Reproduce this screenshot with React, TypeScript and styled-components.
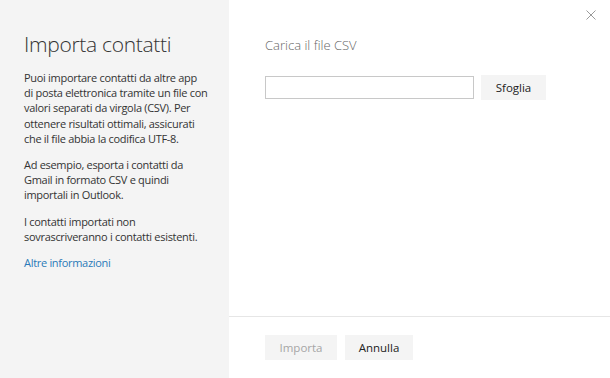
import React from "react";
import styled, { createGlobalStyle } from "styled-components";

const Global = createGlobalStyle`
  html, body { margin: 0; padding: 0; background: #ffffff; }
  body { font-family: "Open Sans", "Segoe UI", "Noto Sans", sans-serif; }
  * { box-sizing: border-box; }
`;

const Dialog = styled.div`
  display: flex;
  width: 610px;
  height: 378px;
  position: relative;
  background: #ffffff;
`;

const Side = styled.aside`
  width: 229px;
  flex: none;
  background: #f4f4f4;
  padding: 30px 6px 0 24px;
  color: #333333;
`;

const Title = styled.h1`
  margin: 0 0 12px 0;
  font-size: 21px;
  font-weight: 300;
  line-height: 28px;
  color: #333333;
  letter-spacing: -0.3px;
`;

const Para = styled.p`
  margin: 0 0 11px 0;
  font-size: 11px;
  line-height: 15.2px;
  letter-spacing: -0.3px;
  color: #333333;
`;

const Link = styled.a`
  display: block;
  font-size: 11px;
  line-height: 15.2px;
  letter-spacing: -0.3px;
  color: #2a7ab8;
  text-decoration: none;
`;

const Main = styled.section`
  flex: 1;
  display: flex;
  flex-direction: column;
`;

const Content = styled.div`
  flex: 1;
  padding: 36px 0 0 36px;
`;

const Heading = styled.h2`
  margin: 0 0 21px 0;
  font-size: 13px;
  font-weight: 300;
  line-height: 18px;
  color: #666666;
`;

const UploadRow = styled.div`
  display: flex;
  align-items: center;
  gap: 7px;
`;

const FileInput = styled.div`
  width: 209px;
  height: 23px;
  border: 1px solid #c8c8c8;
  background: #ffffff;
`;

const Button = styled.button<{ $disabled?: boolean }>`
  height: 25px;
  border: none;
  background: #f4f4f4;
  font-family: inherit;
  font-size: 11.5px;
  font-weight: 500;
  color: ${(p) => (p.$disabled ? "#a6a6a6" : "#222222")};
  padding: 0;
  cursor: ${(p) => (p.$disabled ? "default" : "pointer")};
`;

const BrowseButton = styled(Button)`
  width: 65px;
`;

const Footer = styled.div`
  height: 62px;
  border-top: 1px solid #e6e6e6;
  padding: 18px 0 0 36px;
  display: flex;
  gap: 8px;
  align-items: flex-start;
`;

const ImportButton = styled(Button)`
  width: 72px;
  font-weight: 400;
`;

const CancelButton = styled(Button)`
  width: 68px;
`;

const Close = styled.button`
  position: absolute;
  top: 9px;
  right: 13px;
  width: 12px;
  height: 12px;
  padding: 0;
  border: none;
  background: transparent;
  display: flex;
  align-items: center;
  justify-content: center;
`;

export default function App() {
  return (
    <>
      <Global />
      <Dialog>
        <Side>
          <Title>Importa contatti</Title>
          <Para>
            Puoi importare contatti da altre app
            <br />
            di posta elettronica tramite un file con
            <br />
            valori separati da virgola (CSV). Per
            <br />
            ottenere risultati ottimali, assicurati
            <br />
            che il file abbia la codifica UTF-8.
          </Para>
          <Para>
            Ad esempio, esporta i contatti da
            <br />
            Gmail in formato CSV e quindi
            <br />
            importali in Outlook.
          </Para>
          <Para>
            I contatti importati non
            <br />
            sovrascriveranno i contatti esistenti.
          </Para>
          <Link href="#">Altre informazioni</Link>
        </Side>
        <Main>
          <Content>
            <Heading>Carica il file CSV</Heading>
            <UploadRow>
              <FileInput />
              <BrowseButton>Sfoglia</BrowseButton>
            </UploadRow>
          </Content>
          <Footer>
            <ImportButton $disabled>Importa</ImportButton>
            <CancelButton>Annulla</CancelButton>
          </Footer>
        </Main>
        <Close aria-label="Chiudi">
          <svg width="10" height="10" viewBox="0 0 10 10">
            <path d="M0.5 0.5 L9.5 9.5 M9.5 0.5 L0.5 9.5" stroke="#9a9a9a" strokeWidth="1" fill="none" />
          </svg>
        </Close>
      </Dialog>
    </>
  );
}
